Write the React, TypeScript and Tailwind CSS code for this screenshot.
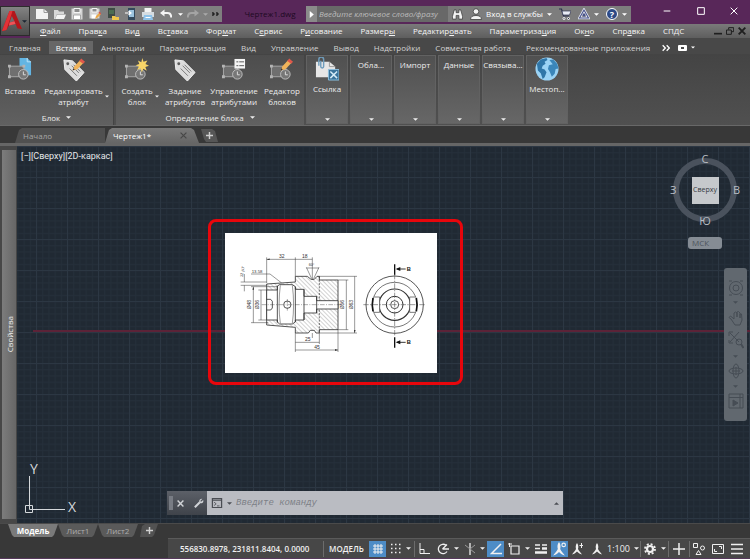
// App.tsx - CAD workspace with ribbon, drawing area and status bar
import React from 'react';

interface MenuItem {
  label: string;
  key: number; // index of the underlined letter
}

const MENU: MenuItem[] = [
  { label: 'Файл', key: 0 },
  { label: 'Правка', key: 4 },
  { label: 'Вид', key: 2 },
  { label: 'Вставка', key: 2 },
  { label: 'Формат', key: 3 },
  { label: 'Сервис', key: 1 },
  { label: 'Рисование', key: 1 },
  { label: 'Размеры', key: 6 },
  { label: 'Редактировать', key: 8 },
  { label: 'Параметризация', key: 11 },
  { label: 'Окно', key: 2 },
  { label: 'Справка', key: 3 },
  { label: 'СПДС', key: -1 },
];

const RIBBON_TABS = [
  'Главная',
  'Вставка',
  'Аннотации',
  'Параметризация',
  'Вид',
  'Управление',
  'Вывод',
  'Надстройки',
  'Совместная работа',
  'Рекомендованные приложения',
];

/* ---------- small shared pieces ---------- */

const Caret: React.FC<{ className?: string }> = ({ className = 'w-[7px] h-1' }) => (
  <svg className={`shrink-0 ${className}`} viewBox="0 0 8 4" fill="currentColor" aria-hidden="true">
    <path d="M0 0h8L4 4z" />
  </svg>
);

const Icon: React.FC<{ children: React.ReactNode; className?: string; box?: string }> = ({
  children,
  className = 'w-3 h-3',
  box = '0 0 12 12',
}) => (
  <svg className={`shrink-0 ${className}`} viewBox={box} fill="none" stroke="currentColor" aria-hidden="true">
    {children}
  </svg>
);

/* ---------- title bar ---------- */

const QuickAccess = () => (
  <div className="flex h-4 w-[192px] shrink-0 items-center bg-[#7f7f7f] pl-1.5 text-white">
    <div className="flex w-[136px] items-center justify-between">
      <button aria-label="Создать">
        <Icon className="h-3 w-3">
          <path d="M0 1h8l4 3.5V11H0z" fill="#f2f2f2" stroke="none" />
          <path d="M8 1v3.5h4" stroke="#9a9a9a" />
        </Icon>
      </button>
      <button aria-label="Открыть">
        <Icon>
          <path d="M0 2h4l1 1.5h5V6H3l-2 5H0z" fill="#d8d8d8" stroke="none" />
          <path d="M3 6.5h9L10 11H1.2z" fill="#f4f4f4" stroke="none" />
        </Icon>
      </button>
      <button aria-label="Сохранить">
        <Icon>
          <path d="M0.5 0.5h11v11H0.5z" fill="#d4d4d4" stroke="none" />
          <path d="M3 0.5h6v4H3z" fill="#8d8d8d" stroke="#f4f4f4" />
          <path d="M2.5 7h7v4.5h-7z" fill="#fff" stroke="#999" strokeWidth=".8" />
        </Icon>
      </button>
      <button aria-label="Сохранить как">
        <Icon>
          <path d="M0.5 0.5h10v10h-10z" fill="#d4d4d4" stroke="none" />
          <path d="M3 0.5h5v3.5H3z" fill="#8d8d8d" stroke="#f4f4f4" />
          <path d="M2.5 6.5h5v4h-5z" fill="#fff" stroke="none" />
          <path d="M6 11l1-3 3.5-3.5 1.5 1.7-3.4 3.4z" fill="#e9a84a" stroke="none" />
          <path d="M10 4l1.8 2" stroke="#d2564e" strokeWidth="1.4" />
        </Icon>
      </button>
      <button aria-label="Открыть с устройства">
        <Icon>
          <path d="M1 0h7v10H1z" fill="#3f4b45" stroke="none" />
          <path d="M2 3h5M2 5h5" stroke="#5a8f5f" />
          <path d="M5 8h3l1 1h3v3H5z" fill="#f0c64c" stroke="none" />
        </Icon>
      </button>
      <button aria-label="Сохранить на устройстве">
        <Icon>
          <path d="M3 0h7v12H3z" fill="#34495c" stroke="none" />
          <path d="M4 2h5v7H4z" fill="#9cc4de" stroke="none" />
          <path d="M0 5h5M3.5 3L6 5 3.5 7" stroke="#fff" strokeWidth="1.2" />
        </Icon>
      </button>
      <button aria-label="Печать">
        <Icon>
          <path d="M2.5 0h7v4h-7z" fill="#f5f5f5" stroke="none" />
          <path d="M0 4h12v5H0z" fill="#d6dde2" stroke="none" />
          <path d="M2 7h8l1 5H1z" fill="#8fc3ea" stroke="none" />
          <path d="M3.5 9.5h5" stroke="#fff" />
        </Icon>
      </button>
      <button aria-label="Отменить">
        <Icon>
          <path d="M1.5 5h6c3 0 3.7 2 3.7 4.5" stroke="#f4f4f4" strokeWidth="2" />
          <path d="M0 5l4.5-3.6v7.2z" fill="#f4f4f4" stroke="none" />
        </Icon>
      </button>
    </div>
    <div className="flex flex-1 items-center justify-around pl-1">
      <Caret className="h-[3px] w-[5px]" />
      <button aria-label="Повторить" className="text-[#a4a4a4]">
        <Icon>
          <path d="M10.5 5h-6C1.500 5 .8 7 .8 9.500" strokeWidth="2" />
          <path d="M12 5L7.500 1.400v7.200z" fill="currentColor" stroke="none" />
        </Icon>
      </button>
      <Caret className="h-[3px] w-[5px] text-[#aaaaaa]" />
      <Icon className="h-2 w-2">
        <path d="M1 3l3 3-3 3zM7 3l3 3-3 3z" fill="#222" stroke="#222" />
      </Icon>
    </div>
  </div>
);

const TitleBar = () => (
  <div className="flex h-6 items-start pt-1.5 text-[8px] leading-4">
    <QuickAccess />
    <div className="w-[84px] shrink-0 overflow-hidden pl-3 text-center whitespace-nowrap text-[#1d0a22]">Чертеж1.dwg</div>
    <button aria-label="Показать" className="flex h-4 w-[11px] shrink-0 items-center justify-center bg-[#8a8a8a] text-white">
      <Icon className="h-[7px] w-[7px]">
        <path d="M3 0l7 6-7 6z" fill="currentColor" stroke="none" />
      </Icon>
    </button>
    <input
      aria-label="Поиск"
      placeholder="Введите ключевое слово/фразу"
      className="h-4 w-[131px] shrink-0 bg-[#686868] pl-0.5 italic text-white outline-none placeholder:text-[#bcbcbc]"
    />
    <div className="flex h-4 w-[183px] shrink-0 items-center justify-between bg-[#7d7d7d] px-1 text-white">
      <button aria-label="Найти">
        <Icon className="h-[11px] w-[11px]">
          <path d="M2.500 1h2v3h3V1h2l2 7v3H7.500V7h-3v4H.5V8z" fill="#f3f3f3" stroke="#3d3d3d" strokeWidth=".8" />
        </Icon>
      </button>
      <button className="flex items-center gap-1">
        <Icon>
          <circle cx="6" cy="3.500" r="2.800" fill="#f3f3f3" stroke="#3d3d3d" strokeWidth=".8" />
          <path d="M.5 11.500c0-3 2.500-4 5.500-4s5.500 1 5.500 4z" fill="#f3f3f3" stroke="#3d3d3d" strokeWidth=".8" />
        </Icon>
        <span className="whitespace-nowrap">Вход в службы</span>
        <Caret className="h-[3px] w-[5px]" />
      </button>
      <button aria-label="Магазин">
        <Icon>
          <path d="M0 1h2.500l2 7H10" stroke="#2f3350" strokeWidth="1.200" />
          <path d="M3 3h9l-1.500 4H4z" fill="#e9ecf5" stroke="#2f3350" strokeWidth=".7" />
          <circle cx="5" cy="10.500" r="1" fill="#2f3350" />
          <circle cx="9.500" cy="10.500" r="1" fill="#2f3350" />
        </Icon>
      </button>
      <button aria-label="Подключение" className="flex items-center gap-1">
        <Icon>
          <path d="M6 2L1.500 10h9z" stroke="#e8ebf8" strokeWidth="2.600" />
          <path d="M6 2L1.500 10h9z" stroke="#49548a" strokeWidth="1.100" />
          <circle cx="6" cy="7" r="1.500" fill="#49548a" stroke="none" />
        </Icon>
        <Caret className="h-[3px] w-[5px]" />
      </button>
      <button aria-label="Справка" className="flex items-center gap-1">
        <span className="flex h-3 w-3 items-center justify-center rounded-full border border-white bg-[#2d4a86] text-[9px] leading-[9px] font-bold">
          ?
        </span>
        <Caret className="h-[3px] w-[5px]" />
      </button>
    </div>
    <div className="-mt-0.5 flex h-3.5 flex-1 items-center justify-between pr-3 pl-8 text-white">
      <button aria-label="Свернуть">
        <Icon className="h-2 w-2">
          <path d="M1 6h10" strokeWidth="1.500" />
        </Icon>
      </button>
      <button aria-label="Развернуть">
        <Icon className="h-2 w-2">
          <path d="M1 1h10v10H1z" strokeWidth="1.500" />
        </Icon>
      </button>
      <button aria-label="Закрыть">
        <Icon className="h-2 w-2">
          <path d="M1 1l10 10M11 1L1 11" strokeWidth="1.500" />
        </Icon>
      </button>
    </div>
  </div>
);

const MenuBar = () => (
  <nav className="flex h-3.5 items-center justify-between bg-linear-to-b from-[#7a7a7a] to-[#5e5e5e] pr-1 pl-2.5 text-[8px] leading-[14px] text-[#f4f4f4]">
    <div className="flex gap-[18px]">
      {MENU.map((m) => (
        <button key={m.label} className="whitespace-nowrap">
          {m.key < 0 ? (
            m.label
          ) : (
            <>
              {m.label.slice(0, m.key)}
              <u>{m.label[m.key]}</u>
              {m.label.slice(m.key + 1)}
            </>
          )}
        </button>
      ))}
    </div>
    <div className="flex shrink-0 items-center gap-1 text-[#1f1f1f]">
      <Icon className="h-2 w-2">
        <path d="M0 10h12" strokeWidth="2.500" />
      </Icon>
      <Icon className="h-2 w-2">
        <path d="M4 4V1h7.500v6H8M.7 4.500H8V11H.7z" strokeWidth="1.500" />
      </Icon>
      <Icon className="h-2 w-2">
        <path d="M1 1l10 10M11 1L1 11" strokeWidth="2.800" />
      </Icon>
    </div>
  </nav>
);

const Header = () => (
  <header className="flex bg-[#582759]">
    <button aria-label="Меню приложения" className="mt-1.5 flex h-[30px] w-[30px] shrink-0 items-center bg-linear-to-b from-[#858585] to-[#484848] pl-0.5 text-[#1a2430] outline outline-[#2c2c2c] -outline-offset-1">
      <svg className="h-[22px] w-5" viewBox="0 0 20 22" aria-hidden="true">
        <path d="M7.500 1h5L20 19l-4.500-.5-2-4.500-6.500 1.500L4.500 20 0 21z" fill="#b3161b" />
        <path d="M7.500 1h3L4.500 20 0 21z" fill="#e33237" />
        <path d="M9.800 6l-2.300 6.500 5-1.200z" fill="#6d6d6d" />
        <path d="M7 15.500l6.500-1.500-1-2.700-5 1.200z" fill="#ef5358" />
      </svg>
      <Caret className="h-[3px] w-[5px]" />
    </button>
    <div className="min-w-0 flex-1">
      <TitleBar />
      <MenuBar />
    </div>
  </header>
);

/* ---------- ribbon ---------- */

const BlockShape = () => (
  <>
    <path d="M1.500 8.500h15v11h-15z" fill="#6f6f6f" stroke="#a9a9a9" />
    <path d="M0 7h3v3H0zM15 7h3v3h-3zM0 18h3v3H0z" fill="#b4b4b4" stroke="none" />
    <circle cx="16" cy="17" r="5" fill="#777" stroke="#bdbdbd" />
    <path d="M16 14v3.500h2.500" stroke="#dedede" />
  </>
);

const TagShape = () => (
  <>
    <path d="M2 2l9 1 12 12-8 9L3 12z" fill="#dcdcdc" stroke="#f3f3f3" />
    <circle cx="6" cy="6" r="1.500" fill="#5a5a5a" stroke="none" />
    <path d="M10 8l7.500 7.500M8 11l7.500 7.500M12 7l7 7" stroke="#777" />
  </>
);

const Pencil = () => (
  <>
    <path d="M11 13l2-4.500L19 2l3.500 3-6.500 6.800z" fill="#f0b35a" stroke="none" />
    <path d="M18 3l2-2.500L24 4l-2 2z" fill="#e0584b" stroke="none" />
    <path d="M11 13l.8-2.200 1.600 1.200z" fill="#333" stroke="none" />
  </>
);

const InsertIcon = () => (
  <Icon className="h-6 w-6" box="0 0 25 25">
    <path d="M12 0h8l4 4v14H12z" fill="#63b5e3" stroke="none" />
    <path d="M20 0v4h4" stroke="#bfe3f6" />
    <BlockShape />
  </Icon>
);
const EditAttrIcon = () => (
  <Icon className="h-6 w-6" box="0 0 25 25">
    <TagShape />
    <Pencil />
  </Icon>
);
const CreateBlockIcon = () => (
  <Icon className="h-6 w-6" box="0 0 25 25">
    <BlockShape />
    <path d="M18 0l1.300 4 4-1.500-2 3.700L25 8l-3.800 1.300 1.500 3.900-3.600-2L17.500 15l-1.200-4-3.800 1.500 2-3.600L11 7.500l3.900-1.200L13.500 2.500l3.500 1.800z" fill="#f8d568" stroke="none" />
  </Icon>
);
const TagIcon = () => (
  <Icon className="h-6 w-6" box="0 0 25 25">
    <TagShape />
  </Icon>
);
const ManageIcon = () => (
  <Icon className="h-6 w-6" box="0 0 25 25">
    <BlockShape />
    <path d="M13 1h11v10H13z" fill="#f5f5f5" stroke="none" />
    <path d="M15 4h2M18 4h5M15 8h2M18 8h5" stroke="#555" />
  </Icon>
);
const EditorIcon = () => (
  <Icon className="h-6 w-6" box="0 0 25 25">
    <BlockShape />
    <Pencil />
  </Icon>
);
const LinkIcon = () => (
  <Icon className="h-6 w-6" box="0 0 25 25">
    <path d="M1 5h14l6 5v11H1z" fill="#e6e6e6" stroke="none" />
    <path d="M15 5v5h6" stroke="#999" />
    <path d="M4 9V2.500a2.500 2.500 0 015 0V10a1.500 1.500 0 01-3 0V4" stroke="#6f9dbd" strokeWidth="1.500" />
    <path d="M14 13h11v11H14z" fill="#39739b" stroke="#8cc0df" />
    <path d="M16 15l7 7M23 15l-7 7" stroke="#d6ecf8" strokeWidth="1.500" />
  </Icon>
);
const GlobeIcon = () => (
  <Icon className="h-6 w-6" box="0 0 25 25">
    <circle cx="12.500" cy="12.500" r="12" fill="#9bd3f5" stroke="none" />
    <path d="M2 7l4-4.500 6-1.500 1 2-3 2 1 2-3 2-1 3 3 1 2 3-2 5-2 2-2-6-3-3z" fill="#2f76a8" stroke="none" />
    <path d="M15 3l4-.5 4 4.500 1.500 5-3 .5-1 5-3 3-2-5-2-3 1-4 4-1z" fill="#3b86ba" stroke="none" />
  </Icon>
);

const RibbonButton: React.FC<{ icon: React.ReactNode; lines: string[]; width: string; caret?: boolean }> = ({
  icon,
  lines,
  width,
  caret,
}) => (
  <button className={`flex shrink-0 items-start justify-center gap-0.5 ${width}`}>
    <span className="flex flex-col items-center">
      {icon}
      <span className="mt-[3px] h-[22px] text-center text-[8px] leading-[11px] whitespace-nowrap">
        {lines.map((l) => (
          <span key={l} className="block">
            {l}
          </span>
        ))}
      </span>
    </span>
    {caret && <Caret className="mt-[37px] h-[3px] w-1" />}
  </button>
);

const PanelTitle: React.FC<{ children: React.ReactNode }> = ({ children }) => (
  <button className="flex h-[15px] w-full items-center justify-center gap-1.5 text-[8px] leading-[15px]">
    {children}
    <Caret className="h-[3px] w-[5px]" />
  </button>
);

const SlimPanel: React.FC<{ label: string; icon?: React.ReactNode }> = ({ label, icon }) => (
  <button className="flex h-[69px] w-[42px] shrink-0 flex-col items-center justify-between bg-linear-to-b from-[#505050] to-[#676767] pb-[3px] text-[8px] leading-[11px] outline outline-[#626262] -outline-offset-1">
    <span className={icon ? 'flex flex-col items-center gap-0.5 pt-0.5' : 'pt-1'}>
      {icon}
      <span className="whitespace-nowrap">{label}</span>
    </span>
    <Caret className="h-[3px] w-[5px]" />
  </button>
);

const Ribbon = () => (
  <section className="text-[#ededed]">
    <div className="flex h-4 items-end gap-px bg-[#484848] pl-0.5 text-[8px] leading-[13px]">
      {RIBBON_TABS.map((t) => (
        <button
          key={t}
          className={`px-[7px] whitespace-nowrap ${t === 'Вставка' ? 'bg-[#676767] text-white' : 'text-[#d2d2d2]'}`}
        >
          {t}
        </button>
      ))}
      <div className="flex h-[13px] items-center gap-2 pl-1 text-white">
        <Icon className="h-2 w-2">
          <path d="M1 2l4 4-4 4M7 2l4 4-4 4" strokeWidth="2" />
        </Icon>
        <span className="flex h-1.5 w-[9px] items-center justify-center rounded-[1px] bg-white">
          <span className="h-0.5 w-[3px] bg-[#484848]" />
        </span>
        <Caret className="-ml-1 h-[3px] w-1" />
      </div>
    </div>
    <div className="flex h-[72px] items-start gap-0.5 border-b border-[#686868] bg-linear-to-b from-[#444444] to-[#505050] pt-px">
      <div className="h-[70px] w-[114px] shrink-0 border-r border-[#444444] bg-linear-to-b from-[#4d4d4d] to-[#606060]">
        <div className="flex h-[55px] pt-[3px]">
          <RibbonButton icon={<InsertIcon />} lines={['Вставка']} width="w-10" />
          <RibbonButton icon={<EditAttrIcon />} lines={['Редактировать', 'атрибут']} width="w-[73px]" caret />
        </div>
        <PanelTitle>Блок</PanelTitle>
      </div>
      <div className="h-[70px] w-[188px] shrink-0 bg-linear-to-b from-[#4d4d4d] to-[#606060]">
        <div className="flex h-[55px] pt-[3px]">
          <RibbonButton icon={<CreateBlockIcon />} lines={['Создать', 'блок']} width="w-12" caret />
          <RibbonButton icon={<TagIcon />} lines={['Задание', 'атрибутов']} width="w-[42px]" />
          <RibbonButton icon={<ManageIcon />} lines={['Управление', 'атрибутами']} width="w-14" />
          <RibbonButton icon={<EditorIcon />} lines={['Редактор', 'блоков']} width="w-10" />
        </div>
        <PanelTitle>Определение блока</PanelTitle>
      </div>
      <SlimPanel label="Ссылка" icon={<LinkIcon />} />
      <SlimPanel label="Обла..." />
      <SlimPanel label="Импорт" />
      <SlimPanel label="Данные" />
      <SlimPanel label="Связыва..." />
      <SlimPanel label="Местоп..." icon={<GlobeIcon />} />
    </div>
  </section>
);

/* ---------- document tabs ---------- */

const FileTabs = () => (
  <div className="flex h-5 items-end border-b-[3px] border-[#666666] bg-[#383838] pl-[15px] text-[8px] leading-[15px]">
    <button className="h-[15px] w-[90px] bg-[#505050] pl-2 text-left text-[#a6a6a6] [clip-path:polygon(0_100%,4px_2px,7px_0,100%_0,100%_100%)]">
      Начало
    </button>
    <button className="flex h-[15px] w-[94px] items-center justify-between bg-linear-to-b from-[#7a7a7a] to-[#666666] pr-3 pl-2 text-white [clip-path:polygon(0_100%,4px_2px,7px_0,86px_0,89px_2px,100%_100%)]">
      Чертеж1*
      <Icon className="h-[7px] w-[7px] text-[#474747]">
        <path d="M1 1l10 10M11 1L1 11" strokeWidth="2" />
      </Icon>
    </button>
    <button aria-label="Новый чертеж" className="mb-px ml-0.5 flex h-[13px] w-[17px] items-center justify-center bg-[#565656] text-[#d0d0d0] [clip-path:polygon(0_0,11px_0,14px_2px,100%_100%,5px_100%,3px_10px)]">
      <Icon className="h-[7px] w-[7px]">
        <path d="M6 0v12M0 6h12" strokeWidth="2.500" />
      </Icon>
    </button>
  </div>
);

/* ---------- drawing area ---------- */

const Grid = () => (
  <svg className="absolute inset-0 h-full w-full" aria-hidden="true">
    <defs>
      <pattern id="minor" width="6.200" height="6.200" patternUnits="userSpaceOnUse" x="19" y="31">
        <path d="M0 .5h6.200M.5 0v6.200" stroke="#252f3a" fill="none" />
      </pattern>
      <pattern id="major" width="31" height="31" patternUnits="userSpaceOnUse" x="19" y="31">
        <path d="M0 .5h31M.5 0v31" stroke="#2c3743" fill="none" />
      </pattern>
    </defs>
    <rect width="100%" height="100%" fill="url(#minor)" />
    <rect width="100%" height="100%" fill="url(#major)" />
    <rect x="16" y="184" width="100%" height="2" fill="#5c2338" />
  </svg>
);

// Section and front view of the tool holder
const PartDrawing = () => (
  <svg className="h-full w-full" viewBox="60 56 636 418" fill="none" stroke="#333" strokeWidth="2" aria-label="Чертеж детали">
    <defs>
      <pattern id="hatch" width="9" height="9" patternUnits="userSpaceOnUse" patternTransform="rotate(-45)">
        <path d="M0 0v9" stroke="#777" strokeWidth="2" />
      </pattern>
      <marker id="arrow" viewBox="0 0 10 6" refX="10" refY="3" markerWidth="6" markerHeight="4" orient="auto-start-reverse">
        <path d="M0 0l10 3L0 6z" fill="#333" stroke="none" />
      </marker>
    </defs>
    {/* sectioned body */}
    <path
      d="M185 208L271 202V185H307L318 194H328L336 185H343V196H399V345H343V355H333L328 347H316L310 355H271V338L185 331z"
      fill="url(#hatch)"
      strokeWidth="2.500"
    />
    <path d="M343 185V355" strokeDasharray="6 4" />
    <path d="M185 226H217V214L224 210H262L271 216V224H297V245H335V258H399V283H335V295H297V316H271V322L262 328H224L217 322V316H185z" fill="#fff" strokeWidth="2.500" />
    <path d="M217 214V324M271 216V322M297 224V316M335 245V295" strokeWidth="2.500" />
    <path d="M226 212c-5 38-5 78 0 114M262 212c5 38 5 78 0 114" strokeWidth="1.500" />
    <path d="M185 254H197L202 260V280L197 286H185" strokeWidth="2.500" />
    <circle cx="247" cy="270" r="11" strokeWidth="2.500" />
    <path d="M170 270H415M247 253V288" strokeWidth="1.200" strokeDasharray="14 4 3 4" />
    {/* dimension lines */}
    <g strokeWidth="1.500">
      <path d="M185 128V205M271 128V185M322 128V196M271 355V412M343 355V388M399 345V412" />
      <path d="M185 134H271M271 134H322M271 383H343M271 406H399" markerStart="url(#arrow)" markerEnd="url(#arrow)" />
      <path d="M145 216V324M168 226V316M424 196V345M449 185V355" markerStart="url(#arrow)" markerEnd="url(#arrow)" />
      <path d="M138 216H217M138 324H190M160 226H185M160 316H185M399 196H430M399 345H430M343 185H456M343 355H456" />
      <path d="M107 202H185M107 212H185M118 178V202M118 230V212M138 178H195L230 205" />
      <path d="M304 160H342M304 158L320 192M342 158L326 192M322 355V370" />
    </g>
    <g fill="#333" stroke="none" fontSize="15" fontFamily="Liberation Sans, sans-serif">
      <text x="222" y="129">32</text>
      <text x="291" y="129">18</text>
      <text x="311" y="154" fontSize="11">60°</text>
      <text x="140" y="174" fontSize="13">13.58</text>
      <text x="300" y="378">25</text>
      <text x="328" y="402">45</text>
      <text transform="translate(138 284) rotate(-90)">Ø48</text>
      <text transform="translate(162 284) rotate(-90)">Ø36</text>
      <text transform="translate(418 284) rotate(-90)">Ø56</text>
      <text transform="translate(443 284) rotate(-90)">Ø63</text>
      <text transform="translate(113 188) rotate(-80)" fontSize="12">12 js7</text>
    </g>
    {/* front view */}
    <circle cx="569" cy="270" r="86" strokeWidth="2.500" />
    <circle cx="569" cy="270" r="67" />
    <circle cx="569" cy="270" r="47" strokeWidth="3.500" />
    <circle cx="569" cy="270" r="25" strokeWidth="3" />
    <circle cx="569" cy="270" r="12" strokeWidth="2.500" />
    <path d="M507 247H524V293H507M631 247H614V293H631" fill="#fff" />
    <path d="M504 250c-3 14-3 26 0 40M634 250c3 14 3 26 0 40" stroke="#111" strokeWidth="5" />
    <path d="M475 270H662M569 178V364" strokeWidth="1.500" strokeDasharray="16 4 4 4" />
    <path d="M569 149V180M569 368V399" stroke="#111" strokeWidth="4" />
    <path d="M602 163H576M602 383H576" stroke="#111" strokeWidth="2.500" />
    <path d="M572 163l14-6v12zM572 383l14-6v12z" fill="#111" stroke="none" />
    <g fill="#111" stroke="none" fontSize="17" fontWeight="700" fontFamily="Liberation Sans, sans-serif">
      <text x="605" y="169">B</text>
      <text x="605" y="389">B</text>
    </g>
  </svg>
);

const ViewCube = () => (
  <div className="absolute top-1.5 right-2.5 flex flex-col items-center text-[11px] leading-[14px] text-[#b9bec4]">
    <div className="relative flex h-[76px] w-[70px] items-center justify-center">
      <svg className="absolute h-16 w-16" viewBox="0 0 64 64" aria-hidden="true">
        <circle cx="32" cy="32" r="29" fill="none" stroke="#4a525d" strokeWidth="6" />
      </svg>
      <span className="absolute top-0">С</span>
      <span className="absolute bottom-0">Ю</span>
      <span className="absolute left-0">З</span>
      <span className="absolute right-0">В</span>
      <button className="relative flex h-[27px] w-[27px] items-center justify-center bg-[#c6c9cc] text-[7px] leading-[10px] text-[#35393e]">
        Сверху
      </button>
    </div>
    <button className="mt-[9px] flex h-3 w-[34px] items-center rounded-[3px] bg-[#858c94] pl-1 text-[8px] leading-3 text-[#4c535b]">
      МСК
    </button>
  </div>
);

const NavBar = () => (
  <div className="absolute top-[122px] right-[3px] flex h-[153px] w-[23px] flex-col items-center justify-between rounded-[3px] bg-[#61686f] px-0.5 py-3 text-[#464d55]">
    <Icon className="h-4 w-4" box="0 0 16 16">
      <circle cx="8" cy="8" r="6.500" />
      <circle cx="8" cy="8" r="3" />
      <path d="M1 1h3M12 1h3M1 15h3M12 15h3" />
    </Icon>
    <Caret className="h-[3px] w-[5px]" />
    <Icon className="h-4 w-4" box="0 0 16 16">
      <path d="M3 9L1 7.500 2.500 6 6 9V3l1.500-1L9 3v4-5l1.500-.5L12 3v5-4l1.500 0 .5 6-2 5H7z" />
    </Icon>
    <Icon className="h-[18px] w-4" box="0 0 16 18">
      <path d="M2 2l9 9M11 1L2 11M1 5V1h4M1 9v3h4" />
      <circle cx="11" cy="11" r="3" />
      <path d="M13 13l2.500 4" strokeWidth="2" />
    </Icon>
    <Caret className="h-[3px] w-[5px]" />
    <Icon className="h-4 w-4" box="0 0 16 16">
      <ellipse cx="8" cy="8" rx="7" ry="3" />
      <ellipse cx="8" cy="8" rx="3" ry="7" />
      <path d="M8 4v8M4 8h8" />
    </Icon>
    <Caret className="h-[3px] w-[5px]" />
    <Icon className="h-4 w-4" box="0 0 16 16">
      <path d="M1 1h14v14H1zM1 4.500h14M12 1v14" />
      <path d="M5 7l5 3-5 3z" fill="currentColor" />
    </Icon>
  </div>
);

const Ucs = () => (
  <svg className="absolute bottom-1 left-1 h-[60px] w-16 text-[#d5d8db]" viewBox="0 0 64 60" fill="none" stroke="currentColor" aria-label="ПСК">
    <path d="M4.500 46.500h7v7h-7zM8.500 17v33.500M8.500 50.500H44" />
    <g fill="currentColor" stroke="none" fontSize="14" fontFamily="Open Sans, sans-serif">
      <text x="9" y="15">Y</text>
      <text x="47" y="53">X</text>
    </g>
  </svg>
);

const CommandLine = () => (
  <div className="absolute bottom-2 left-[150px] flex h-6 w-[396px] bg-[#babcc2]">
    <div className="flex w-10 items-center gap-2.5 bg-linear-to-b from-[#5c6068] to-[#3f434a] pl-0.5 text-[#d0d3d7]">
      <span className="h-3.5 w-1 bg-[#787c84]" />
      <Icon className="-ml-1.5 h-[7px] w-[7px]">
        <path d="M1 1l10 10M11 1L1 11" strokeWidth="2.500" />
      </Icon>
      <Icon className="h-[10px] w-[10px]">
        <path d="M1 11l6-6" strokeWidth="2.500" />
        <path d="M10 1L7.500 3.500l1 1L11 2.500C12 5 10 7 7.500 6 5 5 6.500.500 10 1z" fill="currentColor" stroke="none" />
      </Icon>
    </div>
    <div className="flex flex-1 items-center gap-1 px-1 text-[#4a4d53]">
      <Icon className="h-[10px] w-3">
        <path d="M.5 .5h11v11H.5zM.5 2.500h11" strokeWidth="1.500" />
        <path d="M2.500 5l2.500 2-2.500 2M6 9.500h3" />
      </Icon>
      <Caret className="h-[3px] w-[5px]" />
      <input
        aria-label="Командная строка"
        placeholder="Введите команду"
        className="h-4 min-w-0 flex-1 bg-transparent font-[Liberation_Mono,monospace] text-[9px] leading-4 italic outline-none placeholder:text-[#7c7f86]"
      />
      <Caret className="h-[3px] w-[5px] rotate-180" />
    </div>
  </div>
);

const Workspace = () => (
  <main className="flex min-h-[377px] flex-1 bg-[#474747]">
    <aside className="flex w-[17px] shrink-0 py-1 pr-px pl-0.5">
      <div className="flex w-full items-center justify-center bg-linear-to-r from-[#7c7c7c] to-[#666666]">
        <span className="rotate-180 text-[8px] leading-[11px] text-[#ececec] [writing-mode:vertical-rl]">Свойства</span>
      </div>
    </aside>
    <div className="relative flex-1 overflow-hidden bg-[#202933]">
      <Grid />
      <div className="absolute top-1 left-1 font-[Roboto,sans-serif] text-[9px] leading-3 text-[#e4e7ea]">[−][Сверху][2D-каркас]</div>
      <div className="absolute top-[73px] left-[191px] rounded-lg border-[3px] border-[#e8060c] pt-[11px] pr-[23px] pb-[9px] pl-[14px]">
        <div className="h-[140px] w-[212px] bg-white">
          <PartDrawing />
        </div>
      </div>
      <ViewCube />
      <NavBar />
      <Ucs />
      <CommandLine />
    </div>
  </main>
);

/* ---------- bottom bars ---------- */

const LayoutTabs = () => (
  <div className="flex h-[15px] items-start border-t border-[#4a4a4a] pl-2 text-[8px] leading-[13px]">
    <button className="h-[13px] w-[50px] bg-[#7a7a7a] font-bold text-white [clip-path:polygon(0_0,100%_0,46px_11px,44px_100%,6px_100%,4px_11px)]">
      Модель
    </button>
    <button className="h-[13px] w-10 bg-[#5a5a5a] text-[#adadad] [clip-path:polygon(0_0,100%_0,36px_11px,34px_100%,6px_100%,4px_11px)]">
      Лист1
    </button>
    <button className="h-[13px] w-10 bg-[#5a5a5a] text-[#adadad] [clip-path:polygon(0_0,100%_0,36px_11px,34px_100%,6px_100%,4px_11px)]">
      Лист2
    </button>
    <button aria-label="Новый лист" className="ml-0.5 flex h-[13px] w-[18px] items-center justify-center bg-[#525252] text-[#d0d0d0] [clip-path:polygon(5px_0,100%_0,14px_11px,12px_100%,0_100%,2px_2px)]">
      <Icon className="h-[7px] w-[7px]">
        <path d="M6 0v12M0 6h12" strokeWidth="2.500" />
      </Icon>
    </button>
  </div>
);

const StatusButton: React.FC<{ label: string; on?: boolean; caret?: boolean; children: React.ReactNode }> = ({
  label,
  on,
  caret,
  children,
}) => (
  <button aria-label={label} className="flex h-full shrink-0 items-center">
    <span className={`flex h-4 items-center justify-center ${on ? 'w-[17px] bg-[#4d8cc6]' : 'w-[18px]'}`}>{children}</span>
    {caret && (
      <span className="flex w-2 justify-center">
        <Caret className="h-[3px] w-[5px]" />
      </span>
    )}
  </button>
);

const Sep = () => <span className="h-4 w-px shrink-0 bg-[#6c6c6c]" />;

const Person = () => <path d="M6 0c1.500 2 1.500 4 1 6 1 2 2.500 3.500 4 5.500C9 11 7.500 10 6 8.500 4.500 10 3 11 1 11.500 2.500 9.500 4 8 5 6c-.5-2-.5-4 1-6z" fill="currentColor" stroke="none" />;

const StatusBar = () => (
  <div className="ml-[168px] flex h-5 items-center justify-between border-t border-[#5a5a5a] bg-[#474747] pr-1 text-[8px] leading-4 text-[#f0f0f0]">
    <span className="w-[154px] shrink-0 pl-3 font-semibold whitespace-nowrap">556830.8978, 231811.8404, 0.0000</span>
    <Sep />
    <button className="w-11 shrink-0 font-semibold">МОДЕЛЬ</button>
    <StatusButton label="Сетка" on>
      <Icon>
        <path d="M3 1v10M6 1v10M9 1v10M1 3h10M1 6h10M1 9h10" />
      </Icon>
    </StatusButton>
    <StatusButton label="Шаг" caret>
      <Icon>
        <path d="M1 1.500h11M1 5.500h11M1 9.500h11" strokeWidth="1.500" strokeDasharray="1.500 2.500" />
      </Icon>
    </StatusButton>
    <Sep />
    <StatusButton label="Орто">
      <Icon>
        <path d="M2 0v10.500h10M2 6.500h4v4" />
      </Icon>
    </StatusButton>
    <StatusButton label="Полярное отслеживание" caret>
      <Icon>
        <path d="M10 8.500a4.700 4.700 0 11-1-6.200" strokeWidth="1.300" />
        <path d="M5.500 6H12M5.500 6L10 1.500" strokeWidth="1.300" />
      </Icon>
    </StatusButton>
    <StatusButton label="Изометрия" caret>
      <Icon>
        <path d="M6 0v12" strokeWidth="1.300" />
        <path d="M1 2l10 8M6 6l5-4" stroke="#9a9a9a" />
      </Icon>
    </StatusButton>
    <StatusButton label="Объектное отслеживание" on>
      <Icon>
        <path d="M11 1L1.500 10.500H12" strokeWidth="1.500" />
      </Icon>
    </StatusButton>
    <StatusButton label="Привязка" caret>
      <Icon>
        <path d="M3 3h8v8H3z" strokeWidth="1.200" />
        <path d="M0 1h4M1.500 0v4" />
      </Icon>
    </StatusButton>
    <StatusButton label="Вес линий">
      <Icon>
        <path d="M0 2h5M7 2h5M0 5.500h5" strokeWidth="1.500" />
        <path d="M7 5.500h5M0 9.500h12" strokeWidth="2.500" />
      </Icon>
    </StatusButton>
    <StatusButton label="Видимость аннотаций" on>
      <Icon className="h-3.5 w-3.5">
        <Person />
        <circle cx="10" cy="2.500" r="1.500" />
      </Icon>
    </StatusButton>
    <StatusButton label="Автомасштаб">
      <Icon>
        <Person />
        <path d="M10.500 0v5M8.500 2.500h4" />
      </Icon>
    </StatusButton>
    <button className="flex shrink-0 items-center gap-1 pl-1 text-[9px]">
      <Icon>
        <Person />
      </Icon>
      1:100
      <Caret className="h-[3px] w-[5px]" />
    </button>
    <Sep />
    <StatusButton label="Параметры" caret>
      <Icon>
        <circle cx="6" cy="6" r="3" strokeWidth="2.200" />
        <circle cx="6" cy="6" r="5" strokeWidth="1.800" strokeDasharray="2 1.930" />
      </Icon>
    </StatusButton>
    <Sep />
    <StatusButton label="Монитор аннотаций">
      <Icon>
        <path d="M6 0v12M0 6h12" strokeWidth="1.500" />
      </Icon>
    </StatusButton>
    <Sep />
    <StatusButton label="Изолировать объекты">
      <Icon>
        <path d="M.5 .5h4v4h-4zM5.500 7.500L3 11.500h5z" />
        <circle cx="9.500" cy="5" r="2" />
      </Icon>
    </StatusButton>
    <StatusButton label="Полный экран">
      <Icon>
        <path d="M.5 1.500h11v9H.5z" />
        <path d="M7 3.500h2.500V6M5 8.500H2.500V6" />
      </Icon>
    </StatusButton>
    <StatusButton label="Адаптация">
      <Icon>
        <path d="M0 1.500h12M0 6h12M0 10.500h12" strokeWidth="1.300" />
      </Icon>
    </StatusButton>
  </div>
);

const App: React.FC = () => {
  return (
    <div className="flex min-h-screen flex-col overflow-hidden bg-[#383838] font-['Open_Sans',sans-serif]">
      <Header />
      <Ribbon />
      <FileTabs />
      <Workspace />
      <footer className="border-b border-[#573a5c]">
        <LayoutTabs />
        <StatusBar />
      </footer>
    </div>
  );
};

export default App;
